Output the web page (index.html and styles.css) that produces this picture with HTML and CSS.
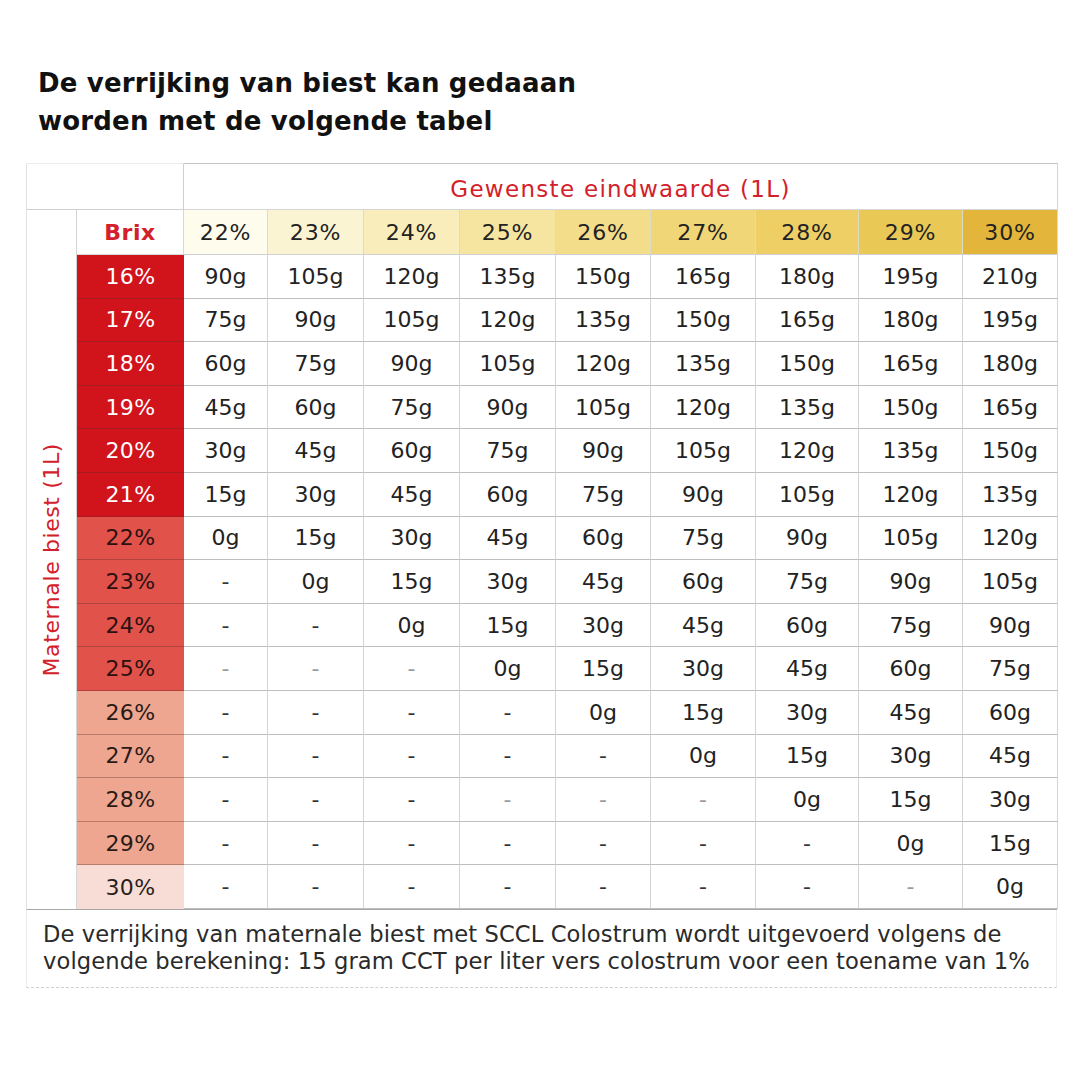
FILE: index.html
```html
<!DOCTYPE html>
<html lang="nl">
<head>
<meta charset="utf-8">
<title>Verrijking van biest</title>
<link rel="stylesheet" href="styles.css">
</head>
<body>
<main class="page">
  <h1 class="title">De verrijking van biest kan gedaaan<br>worden met de volgende tabel</h1>
  <div class="sheet">
    <div class="grid">
      <div class="corner"></div>
      <div class="target-head">Gewenste eindwaarde (1L)</div>
      <div class="side"><span class="side-label">Maternale biest (1L)</span></div>
      <div class="brix-head">Brix</div>
      <div class="th h22">22%</div>
      <div class="th h23">23%</div>
      <div class="th h24">24%</div>
      <div class="th h25">25%</div>
      <div class="th h26">26%</div>
      <div class="th h27">27%</div>
      <div class="th h28">28%</div>
      <div class="th h29">29%</div>
      <div class="th h30">30%</div>

      <div class="b dark">16%</div><div class="c">90g</div><div class="c">105g</div><div class="c">120g</div><div class="c">135g</div><div class="c">150g</div><div class="c">165g</div><div class="c">180g</div><div class="c">195g</div><div class="c">210g</div>
      <div class="b dark">17%</div><div class="c">75g</div><div class="c">90g</div><div class="c">105g</div><div class="c">120g</div><div class="c">135g</div><div class="c">150g</div><div class="c">165g</div><div class="c">180g</div><div class="c">195g</div>
      <div class="b dark">18%</div><div class="c">60g</div><div class="c">75g</div><div class="c">90g</div><div class="c">105g</div><div class="c">120g</div><div class="c">135g</div><div class="c">150g</div><div class="c">165g</div><div class="c">180g</div>
      <div class="b dark">19%</div><div class="c">45g</div><div class="c">60g</div><div class="c">75g</div><div class="c">90g</div><div class="c">105g</div><div class="c">120g</div><div class="c">135g</div><div class="c">150g</div><div class="c">165g</div>
      <div class="b dark">20%</div><div class="c">30g</div><div class="c">45g</div><div class="c">60g</div><div class="c">75g</div><div class="c">90g</div><div class="c">105g</div><div class="c">120g</div><div class="c">135g</div><div class="c">150g</div>
      <div class="b dark">21%</div><div class="c">15g</div><div class="c">30g</div><div class="c">45g</div><div class="c">60g</div><div class="c">75g</div><div class="c">90g</div><div class="c">105g</div><div class="c">120g</div><div class="c">135g</div>
      <div class="b mid">22%</div><div class="c">0g</div><div class="c">15g</div><div class="c">30g</div><div class="c">45g</div><div class="c">60g</div><div class="c">75g</div><div class="c">90g</div><div class="c">105g</div><div class="c">120g</div>
      <div class="b mid">23%</div><div class="c dash">-</div><div class="c">0g</div><div class="c">15g</div><div class="c">30g</div><div class="c">45g</div><div class="c">60g</div><div class="c">75g</div><div class="c">90g</div><div class="c">105g</div>
      <div class="b mid">24%</div><div class="c dash">-</div><div class="c dash">-</div><div class="c">0g</div><div class="c">15g</div><div class="c">30g</div><div class="c">45g</div><div class="c">60g</div><div class="c">75g</div><div class="c">90g</div>
      <div class="b mid">25%</div><div class="c dash light">-</div><div class="c dash light">-</div><div class="c dash light">-</div><div class="c">0g</div><div class="c">15g</div><div class="c">30g</div><div class="c">45g</div><div class="c">60g</div><div class="c">75g</div>
      <div class="b soft">26%</div><div class="c dash">-</div><div class="c dash">-</div><div class="c dash">-</div><div class="c dash">-</div><div class="c">0g</div><div class="c">15g</div><div class="c">30g</div><div class="c">45g</div><div class="c">60g</div>
      <div class="b soft">27%</div><div class="c dash">-</div><div class="c dash">-</div><div class="c dash">-</div><div class="c dash">-</div><div class="c dash">-</div><div class="c">0g</div><div class="c">15g</div><div class="c">30g</div><div class="c">45g</div>
      <div class="b soft">28%</div><div class="c dash">-</div><div class="c dash">-</div><div class="c dash">-</div><div class="c dash light">-</div><div class="c dash light">-</div><div class="c dash light">-</div><div class="c">0g</div><div class="c">15g</div><div class="c">30g</div>
      <div class="b soft">29%</div><div class="c dash">-</div><div class="c dash">-</div><div class="c dash">-</div><div class="c dash">-</div><div class="c dash">-</div><div class="c dash">-</div><div class="c dash">-</div><div class="c">0g</div><div class="c">15g</div>
      <div class="b pale">30%</div><div class="c dash">-</div><div class="c dash">-</div><div class="c dash">-</div><div class="c dash">-</div><div class="c dash">-</div><div class="c dash">-</div><div class="c dash">-</div><div class="c dash light">-</div><div class="c">0g</div>
    </div>
    <p class="note">De verrijking van maternale biest met SCCL Colostrum wordt uitgevoerd volgens de<br>volgende berekening: 15 gram CCT per liter vers colostrum voor een toename van 1%</p>
  </div>
</main>
</body>
</html>
```

FILE: styles.css
```css
html, body {
  margin: 0;
  padding: 0;
  background: #ffffff;
}

.page {
  width: 1080px;
  height: 1080px;
  box-sizing: border-box;
  padding: 64px 0 0 26px;
  font-family: "DejaVu Sans", Verdana, sans-serif;
  color: #1e1e1e;
}

.title {
  margin: 0 0 23px 12px;
  font-size: 26px;
  line-height: 38px;
  font-weight: 700;
  color: #111111;
  letter-spacing: 0.2px;
}

.sheet {
  width: 1031px;
}

.grid {
  display: grid;
  grid-template-columns: 50px 107px 84px 96px 96px 96px 95px 105px 103px 104px 95px;
  grid-template-rows: 47px 45px repeat(15, 43.6px);
  border-left: 1px solid #e2e2e2;
  border-bottom: 1px solid #a8a8a8;
}

.grid > div {
  box-sizing: border-box;
  display: flex;
  align-items: center;
  justify-content: center;
}

.corner {
  grid-column: 1 / span 2;
  border-top: 1px solid #ececec;
  border-bottom: 1px solid #d0d0d0;
  border-right: 1px solid #cfcfcf;
}

.target-head {
  grid-column: 3 / span 9;
  border-top: 1px solid #c4c4c4;
  border-right: 1px solid #d6d6d6;
  border-bottom: 1px solid #d6d6d6;
  color: #d3202a;
  font-size: 23px;
  letter-spacing: 1.3px;
  padding-top: 4px;
}

.side {
  grid-column: 1;
  grid-row: 2 / span 16;
  border-right: 1px solid #d4d4d4;
}

.side-label {
  writing-mode: vertical-rl;
  transform: rotate(180deg);
  color: #d3202a;
  font-size: 22px;
  letter-spacing: 0.6px;
}

.brix-head {
  color: #d3202a;
  font-weight: 700;
  font-size: 22px;
  letter-spacing: 0.6px;
  border-right: 1px solid #d8d8d8;
  border-bottom: 1px solid #d8d8d8;
}

.th {
  font-size: 22px;
  letter-spacing: 0.8px;
  color: #222222;
  border-right: 1px solid #dcdcc0;
  border-bottom: 1px solid #d0d0d0;
}

.h22 { background: #fefcec; }
.h23 { background: #fbf4d2; }
.h24 { background: #f8edbb; }
.h25 { background: #f5e5a1; }
.h26 { background: #f3dd8b; }
.h27 { background: #f0d677; }
.h28 { background: #edcf66; }
.h29 { background: #eac856; }
.h30 { background: #e3b63b; }

.b {
  font-size: 22px;
  letter-spacing: 0.4px;
  border-bottom: 1px solid rgba(90, 40, 40, 0.35);
}

.b.dark { background: #d1131c; color: #ffffff; }
.b.mid { background: #e1524b; color: #2a1010; }
.b.soft { background: #eea690; color: #2a1a16; }
.b.pale { background: #f7ddd5; color: #2a1e1c; border-bottom: none; }

.c {
  font-size: 22px;
  color: #222222;
  border-right: 1px solid #d4d4d4;
  border-bottom: 1px solid #bdbdbd;
}

.c.dash {
  color: #333333;
}

.c.dash.light {
  color: #999999;
}

.note {
  margin: 0;
  padding: 11px 0 12px 16px;
  font-size: 22.6px;
  line-height: 27px;
  letter-spacing: 0.1px;
  color: #2a2a2a;
  border-left: 1px solid #ececec;
  border-right: 1px solid #ececec;
  border-bottom: 1px dashed #cfcfcf;
}
```
